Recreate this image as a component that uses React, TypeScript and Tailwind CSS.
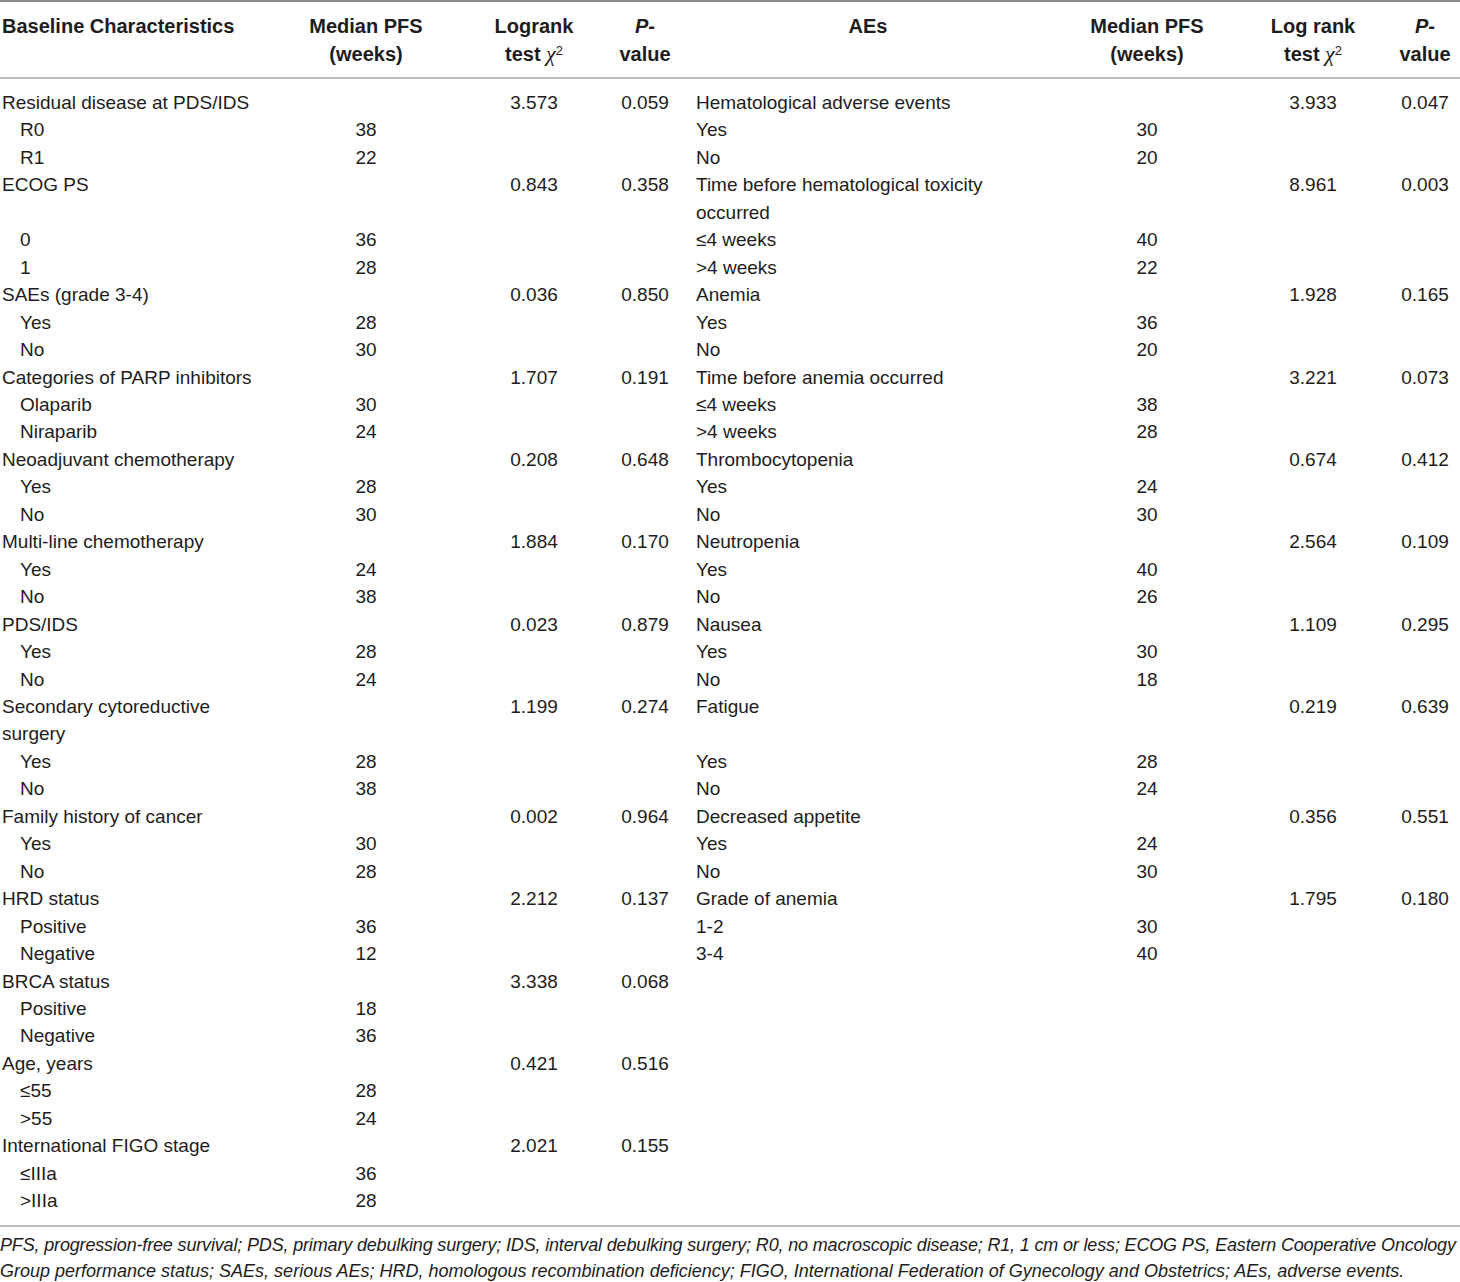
type Row = {
  label: string;
  sub?: boolean;
  pfs?: string;
  chi?: string;
  p?: string;
  aeLabel?: string;
  aePfs?: string;
  aeChi?: string;
  aeP?: string;
};

const rows: Row[] = [
  { label: 'Residual disease at PDS/IDS', chi: '3.573', p: '0.059', aeLabel: 'Hematological adverse events', aeChi: '3.933', aeP: '0.047' },
  { label: 'R0', sub: true, pfs: '38', aeLabel: 'Yes', aePfs: '30' },
  { label: 'R1', sub: true, pfs: '22', aeLabel: 'No', aePfs: '20' },
  { label: 'ECOG PS', chi: '0.843', p: '0.358', aeLabel: 'Time before hematological toxicity occurred', aeChi: '8.961', aeP: '0.003' },
  { label: '0', sub: true, pfs: '36', aeLabel: '≤4 weeks', aePfs: '40' },
  { label: '1', sub: true, pfs: '28', aeLabel: '>4 weeks', aePfs: '22' },
  { label: 'SAEs (grade 3-4)', chi: '0.036', p: '0.850', aeLabel: 'Anemia', aeChi: '1.928', aeP: '0.165' },
  { label: 'Yes', sub: true, pfs: '28', aeLabel: 'Yes', aePfs: '36' },
  { label: 'No', sub: true, pfs: '30', aeLabel: 'No', aePfs: '20' },
  { label: 'Categories of PARP inhibitors', chi: '1.707', p: '0.191', aeLabel: 'Time before anemia occurred', aeChi: '3.221', aeP: '0.073' },
  { label: 'Olaparib', sub: true, pfs: '30', aeLabel: '≤4 weeks', aePfs: '38' },
  { label: 'Niraparib', sub: true, pfs: '24', aeLabel: '>4 weeks', aePfs: '28' },
  { label: 'Neoadjuvant chemotherapy', chi: '0.208', p: '0.648', aeLabel: 'Thrombocytopenia', aeChi: '0.674', aeP: '0.412' },
  { label: 'Yes', sub: true, pfs: '28', aeLabel: 'Yes', aePfs: '24' },
  { label: 'No', sub: true, pfs: '30', aeLabel: 'No', aePfs: '30' },
  { label: 'Multi-line chemotherapy', chi: '1.884', p: '0.170', aeLabel: 'Neutropenia', aeChi: '2.564', aeP: '0.109' },
  { label: 'Yes', sub: true, pfs: '24', aeLabel: 'Yes', aePfs: '40' },
  { label: 'No', sub: true, pfs: '38', aeLabel: 'No', aePfs: '26' },
  { label: 'PDS/IDS', chi: '0.023', p: '0.879', aeLabel: 'Nausea', aeChi: '1.109', aeP: '0.295' },
  { label: 'Yes', sub: true, pfs: '28', aeLabel: 'Yes', aePfs: '30' },
  { label: 'No', sub: true, pfs: '24', aeLabel: 'No', aePfs: '18' },
  { label: 'Secondary cytoreductive surgery', chi: '1.199', p: '0.274', aeLabel: 'Fatigue', aeChi: '0.219', aeP: '0.639' },
  { label: 'Yes', sub: true, pfs: '28', aeLabel: 'Yes', aePfs: '28' },
  { label: 'No', sub: true, pfs: '38', aeLabel: 'No', aePfs: '24' },
  { label: 'Family history of cancer', chi: '0.002', p: '0.964', aeLabel: 'Decreased appetite', aeChi: '0.356', aeP: '0.551' },
  { label: 'Yes', sub: true, pfs: '30', aeLabel: 'Yes', aePfs: '24' },
  { label: 'No', sub: true, pfs: '28', aeLabel: 'No', aePfs: '30' },
  { label: 'HRD status', chi: '2.212', p: '0.137', aeLabel: 'Grade of anemia', aeChi: '1.795', aeP: '0.180' },
  { label: 'Positive', sub: true, pfs: '36', aeLabel: '1-2', aePfs: '30' },
  { label: 'Negative', sub: true, pfs: '12', aeLabel: '3-4', aePfs: '40' },
  { label: 'BRCA status', chi: '3.338', p: '0.068' },
  { label: 'Positive', sub: true, pfs: '18' },
  { label: 'Negative', sub: true, pfs: '36' },
  { label: 'Age, years', chi: '0.421', p: '0.516' },
  { label: '≤55', sub: true, pfs: '28' },
  { label: '>55', sub: true, pfs: '24' },
  { label: 'International FIGO stage', chi: '2.021', p: '0.155' },
  { label: '≤IIIa', sub: true, pfs: '36' },
  { label: '>IIIa', sub: true, pfs: '28' }
];

function ChiHeader({ label }: { label: string }) {
  return (
    <>
      {label}
      <br />
      test <i className="font-['Liberation_Serif',serif] text-[22px] font-normal">χ</i>
      <sup className="text-[13px] font-normal">2</sup>
    </>
  );
}

export default function App() {
  const last = rows.length - 1;

  return (
    <div className="w-[1460px] bg-white font-['Liberation_Sans',Arial,sans-serif] text-[#1e1c1c]">
      <table className="w-[1460px] table-fixed border-collapse">
        <colgroup>
          <col className="w-[270px]" />
          <col className="w-[192px]" />
          <col className="w-[144px]" />
          <col className="w-[78px]" />
          <col className="w-[368px]" />
          <col className="w-[190px]" />
          <col className="w-[142px]" />
          <col className="w-[76px]" />
        </colgroup>
        <thead>
          <tr className="border-t-2 border-b-2 border-t-[#8c8c8c] border-b-[#bdbdbd] text-[20px] font-bold leading-[28px]">
            <th className="pt-[10px] pb-[9px] pl-[2px] text-left align-top font-bold">Baseline Characteristics</th>
            <th className="pt-[10px] pb-[9px] text-center align-top font-bold">
              Median PFS
              <br />
              (weeks)
            </th>
            <th className="pt-[10px] pb-[9px] text-center align-top font-bold">
              <ChiHeader label="Logrank" />
            </th>
            <th className="pt-[10px] pb-[9px] text-center align-top font-bold">
              <i>P</i>-
              <br />
              value
            </th>
            <th className="pt-[10px] pb-[9px] text-center align-top font-bold">AEs</th>
            <th className="pt-[10px] pb-[9px] text-center align-top font-bold">
              Median PFS
              <br />
              (weeks)
            </th>
            <th className="pt-[10px] pb-[9px] text-center align-top font-bold">
              <ChiHeader label="Log rank" />
            </th>
            <th className="pt-[10px] pb-[9px] pl-[6px] text-center align-top font-bold">
              <i>P</i>-
              <br />
              value
            </th>
          </tr>
        </thead>
        <tbody className="border-b-2 border-b-[#bdbdbd] text-[19px] leading-[27.45px]">
          {rows.map((row, i) => {
            const pad = i === 0 ? 'pt-[10px]' : i === last ? 'pb-[10px]' : '';
            return (
              <tr key={i}>
                <td className={`${pad} align-top pr-[8px] ${row.sub ? 'pl-[20px]' : 'pl-[2px]'}`}>{row.label}</td>
                <td className={`${pad} align-top text-center`}>{row.pfs}</td>
                <td className={`${pad} align-top text-center`}>{row.chi}</td>
                <td className={`${pad} align-top text-center`}>{row.p}</td>
                <td className={`${pad} align-top px-[12px]`}>{row.aeLabel}</td>
                <td className={`${pad} align-top text-center`}>{row.aePfs}</td>
                <td className={`${pad} align-top text-center`}>{row.aeChi}</td>
                <td className={`${pad} align-top pl-[6px] text-center`}>{row.aeP}</td>
              </tr>
            );
          })}
        </tbody>
      </table>
      <p className="mt-[5px] whitespace-nowrap text-[18px] italic leading-[26px]">
        <span className="block tracking-[-0.16px]">
          PFS, progression-free survival; PDS, primary debulking surgery; IDS, interval debulking surgery; R0, no macroscopic disease; R1, 1 cm or less; ECOG PS, Eastern Cooperative Oncology
        </span>
        <span className="block">
          Group performance status; SAEs, serious AEs; HRD, homologous recombination deficiency; FIGO, International Federation of Gynecology and Obstetrics; AEs, adverse events.
        </span>
      </p>
    </div>
  );
}
